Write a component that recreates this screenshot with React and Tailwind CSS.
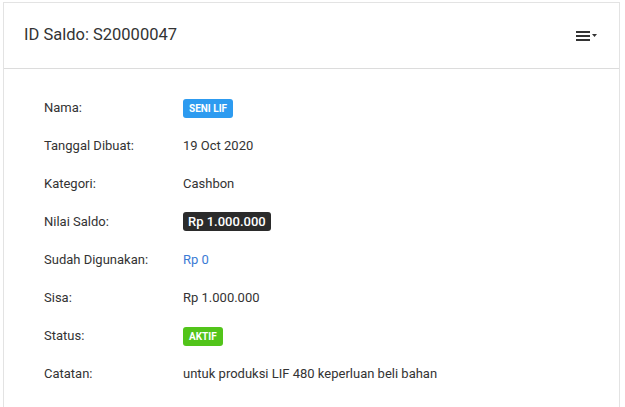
export default function App() {
  const rows = [
    ["Nama:", <span className="inline-flex items-center h-[19px] px-[6px] rounded-[3px] bg-[#2d9bf0] text-white text-[10px] font-bold leading-none">SENI LIF</span>],
    ["Tanggal Dibuat:", <span>19 Oct 2020</span>],
    ["Kategori:", <span>Cashbon</span>],
    ["Nilai Saldo:", <span className="inline-flex items-center h-[19px] px-[5px] rounded-[3px] bg-[#2b2b2b] text-white text-[13px] font-medium leading-none">Rp 1.000.000</span>],
    ["Sudah Digunakan:", <span className="text-[#3a7bd5]">Rp 0</span>],
    ["Sisa:", <span>Rp 1.000.000</span>],
    ["Status:", <span className="inline-flex items-center h-[19px] px-[6px] rounded-[3px] bg-[#52c41a] text-white text-[10px] font-bold leading-none">AKTIF</span>],
    ["Catatan:", <span>untuk produksi LIF 480 keperluan beli bahan</span>],
  ];
  return (
    <div className="w-[625px] h-[407px] overflow-hidden bg-white" style={{ fontFamily: "Roboto, 'Liberation Sans', sans-serif" }}>
      <div className="ml-[3px] mr-[5px] mt-[2px] border border-[#e3e3e3] bg-white h-[420px]">
        <div className="h-[66px] flex items-center justify-between pl-[20px] pr-[22px] border-b border-[#dcdcdc]">
          <div className="text-[16.5px] text-[#333]">ID Saldo: S20000047</div>
          <div className="flex items-center gap-[2px]">
            <div className="flex flex-col gap-[2px]">
              <div className="w-[14px] h-[2px] bg-[#333]"></div>
              <div className="w-[14px] h-[2px] bg-[#333]"></div>
              <div className="w-[14px] h-[2px] bg-[#333]"></div>
            </div>
            <svg width="5" height="3" viewBox="0 0 5 3"><path d="M0 0H5L2.5 3Z" fill="#333" /></svg>
          </div>
        </div>
        <div className="pt-[20px] pl-[40px] text-[13px] text-[#333]">
          {rows.map(([k, v]) => (
            <div key={k} className="flex items-center h-[38px]">
              <div className="w-[139px]">{k}</div>
              <div>{v}</div>
            </div>
          ))}
        </div>
      </div>
    </div>
  );
}
